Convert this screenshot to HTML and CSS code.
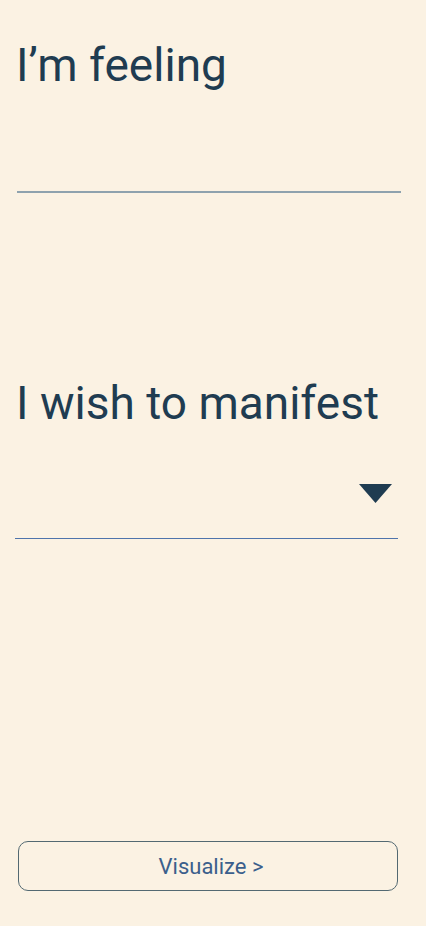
FILE: index.html
```html
<!DOCTYPE html>
<html lang="en">
<head>
<meta charset="utf-8">
<title>Manifest</title>
<link rel="stylesheet" href="styles.css">
</head>
<body>
<main class="screen">
  <section class="field feeling">
    <h1 class="label label-feeling">I’m feeling</h1>
    <div class="input-line line-grey"></div>
  </section>
  <section class="field manifest">
    <h2 class="label label-manifest">I wish to manifest</h2>
    <div class="select">
      <svg class="caret" width="33" height="19" viewBox="0 0 33 19"><polygon points="0,0 33,0 16.5,19" fill="#1f3c51"/></svg>
    </div>
    <div class="input-line line-blue"></div>
  </section>
  <div class="spacer"></div>
  <button class="visualize">Visualize &gt;</button>
</main>
</body>
</html>
```
FILE: styles.css
```css
html, body {
  margin: 0;
  padding: 0;
  background: #fbf2e3;
}
.screen {
  width: 426px;
  height: 926px;
  box-sizing: border-box;
  display: flex;
  flex-direction: column;
  padding: 0 0 35px 0;
}
.label {
  margin: 0;
  font-weight: 400;
  color: #1f3c51;
  font-family: Roboto, sans-serif;
}
.label-feeling {
  font-size: 46px;
  line-height: 60px;
  padding: 35px 0 0 16px;
}
.input-line {
  height: 0;
}
.line-grey {
  margin: 96px 25px 0 17px;
  border-top: 2px solid #8ea2ae;
}
.manifest {
  margin-top: 182px;
}
.label-manifest {
  font-size: 46px;
  line-height: 56px;
  padding-left: 16px;
}
.select {
  display: flex;
  justify-content: flex-end;
  padding: 53px 34px 0 0;
  height: 54px;
}
.caret {
  display: block;
}
.line-blue {
  margin: 0 28px 0 15px;
  border-top: 1px solid #4f74ab;
}
.spacer {
  flex: 1;
}
.visualize {
  margin: 0 28px 0 18px;
  height: 50px;
  padding: 0 0 0 6px;
  border: 1.5px solid #536972;
  border-radius: 10px;
  background: transparent;
  font-family: Roboto, sans-serif;
  font-size: 22px;
  color: #3b5f8c;
}
```
